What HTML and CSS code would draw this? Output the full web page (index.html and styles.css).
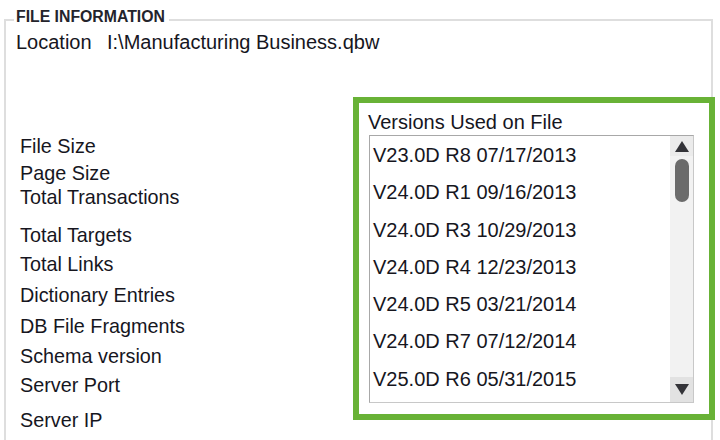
FILE: index.html
```html
<!DOCTYPE html>
<html>
<head>
<meta charset="utf-8">
<link rel="stylesheet" href="styles.css">
</head>
<body>
<div class="panel">
  <div class="legend">FILE INFORMATION</div>
  <div class="location-row">
    <span class="location-label">Location</span>
    <span class="location-value">I:\Manufacturing Business.qbw</span>
  </div>
  <div class="content">
    <div class="labels">
      <div class="label">File Size</div>
      <div class="label">Page Size</div>
      <div class="label">Total Transactions</div>
      <div class="label">Total Targets</div>
      <div class="label">Total Links</div>
      <div class="label">Dictionary Entries</div>
      <div class="label">DB File Fragments</div>
      <div class="label">Schema version</div>
      <div class="label">Server Port</div>
      <div class="label">Server IP</div>
    </div>
    <div class="highlight">
      <div class="caption">Versions Used on File</div>
      <div class="listbox">
        <div class="items">
          <div class="item">V23.0D R8 07/17/2013</div>
          <div class="item">V24.0D R1 09/16/2013</div>
          <div class="item">V24.0D R3 10/29/2013</div>
          <div class="item">V24.0D R4 12/23/2013</div>
          <div class="item">V24.0D R5 03/21/2014</div>
          <div class="item">V24.0D R7 07/12/2014</div>
          <div class="item">V25.0D R6 05/31/2015</div>
        </div>
        <div class="scrollbar">
          <div class="sb-btn sb-up"><span class="arrow-up"></span></div>
          <div class="sb-track"><div class="sb-thumb"></div></div>
          <div class="sb-btn sb-down"><span class="arrow-down"></span></div>
        </div>
      </div>
    </div>
  </div>
</div>
</body>
</html>
```

FILE: styles.css
```css
* { box-sizing: border-box; }

html, body {
  margin: 0;
  padding: 0;
  background: #ffffff;
  width: 720px;
  height: 440px;
  overflow: hidden;
}

body {
  font-family: "Liberation Sans", Arial, sans-serif;
  color: #16161e;
}

.panel {
  position: relative;
  margin: 19px 7px 0 4px;
  height: 440px;
  border: 2px solid #dedede;
  border-bottom: none;
}

.legend {
  position: absolute;
  top: -13px;
  left: 8px;
  padding: 0 4px 0 2px;
  background: #ffffff;
  font-size: 15.8px;
  font-weight: bold;
  line-height: 18px;
  color: #24242c;
}

.location-row {
  display: flex;
  padding: 9px 0 0 10px;
  font-size: 20px;
  line-height: 24px;
}

.location-label {
  width: 91px;
}

.content {
  display: flex;
  margin-top: 43px;
}

.labels {
  width: 347px;
  padding: 38px 0 0 14px;
  display: flex;
  flex-direction: column;
}

.label {
  font-size: 19.8px;
  line-height: 22px;
  white-space: nowrap;
}

.label:nth-child(2) { margin-top: 5px; }
.label:nth-child(3) { margin-top: 2px; }
.label:nth-child(4) { margin-top: 16px; }
.label:nth-child(5) { margin-top: 7px; }
.label:nth-child(6) { margin-top: 9px; }
.label:nth-child(7) { margin-top: 9px; }
.label:nth-child(8) { margin-top: 8px; }
.label:nth-child(9) { margin-top: 7px; }
.label:nth-child(10) { margin-top: 13px; }

.highlight {
  width: 362px;
  height: 323px;
  margin-right: -4px;
  border: 6px solid #68b236;
  background: #ffffff;
  padding: 8px 0 0 9px;
}

.caption {
  font-size: 20px;
  line-height: 22px;
  margin-bottom: 2px;
}

.listbox {
  display: flex;
  margin-left: 1px;
  width: 325px;
  height: 268px;
  border: 1px solid #a8a8a8;
  border-right-color: #c8c8c8;
  border-bottom-color: #c8c8c8;
  background: #ffffff;
}

.items {
  flex: 1;
  padding: 1px 0 0 3px;
}

.item {
  font-size: 20px;
  line-height: 37.3px;
  white-space: nowrap;
}

.scrollbar {
  width: 23px;
  display: flex;
  flex-direction: column;
  background: #f2f2f2;
}

.sb-btn {
  display: flex;
  align-items: center;
  justify-content: center;
}

.sb-up {
  height: 20px;
  background: #ebebeb;
}

.sb-down {
  height: 25px;
  background: #e2e2e2;
}

.sb-track {
  flex: 1;
  padding: 3px 0 0 5px;
}

.sb-thumb {
  width: 14px;
  height: 43px;
  border-radius: 7px;
  background: #6b6b6b;
}

.arrow-up {
  width: 0;
  height: 0;
  border-left: 7px solid transparent;
  border-right: 7px solid transparent;
  border-bottom: 11px solid #333338;
}

.arrow-down {
  width: 0;
  height: 0;
  border-left: 7px solid transparent;
  border-right: 7px solid transparent;
  border-top: 11px solid #333338;
}
```
